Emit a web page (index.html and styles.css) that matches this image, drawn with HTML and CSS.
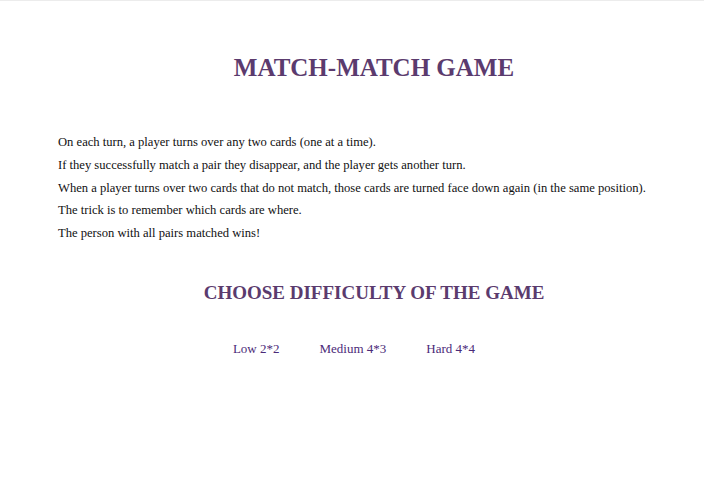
FILE: index.html
```html
<!DOCTYPE html>
<html>
<head>
<meta charset="utf-8">
<link rel="stylesheet" href="styles.css">
</head>
<body>
<div class="topline"></div>
<main class="page">
  <h1 class="title">MATCH-MATCH GAME</h1>
  <div class="rules">
    <p>On each turn, a player turns over any two cards (one at a time).</p>
    <p>If they successfully match a pair they disappear, and the player gets another turn.</p>
    <p>When a player turns over two cards that do not match, those cards are turned face down again (in the same position).</p>
    <p>The trick is to remember which cards are where.</p>
    <p>The person with all pairs matched wins!</p>
  </div>
  <h2 class="subtitle">CHOOSE DIFFICULTY OF THE GAME</h2>
  <nav class="levels">
    <a class="level" href="#">Low 2*2</a>
    <a class="level" href="#">Medium 4*3</a>
    <a class="level" href="#">Hard 4*4</a>
  </nav>
</main>
</body>
</html>
```
FILE: styles.css
```css
html, body {
  margin: 0;
  padding: 0;
  background: #ffffff;
}
body {
  font-family: "Liberation Serif", "Times New Roman", serif;
  color: #111;
}
.topline {
  height: 1px;
  background: #ececec;
}
.page {
  padding: 0 0 0 58px;
  width: 632px;
}
.title {
  margin: 51px 0 0 0;
  text-align: center;
  font-size: 25px;
  line-height: 32px;
  font-weight: bold;
  color: #5b3b6e;
}
.rules {
  margin-top: 47px;
}
.rules p {
  margin: 0;
  font-size: 12.6px;
  line-height: 22.75px;
}
.subtitle {
  margin: 35px 0 0 0;
  text-align: center;
  font-size: 19px;
  line-height: 26px;
  font-weight: bold;
  color: #5b3b6e;
}
.levels {
  margin-top: 34px;
  display: flex;
  justify-content: center;
  gap: 40px;
  padding-right: 40px;
}
.level {
  font-size: 13px;
  line-height: 18px;
  color: #4b2a78;
  text-decoration: none;
}
```
